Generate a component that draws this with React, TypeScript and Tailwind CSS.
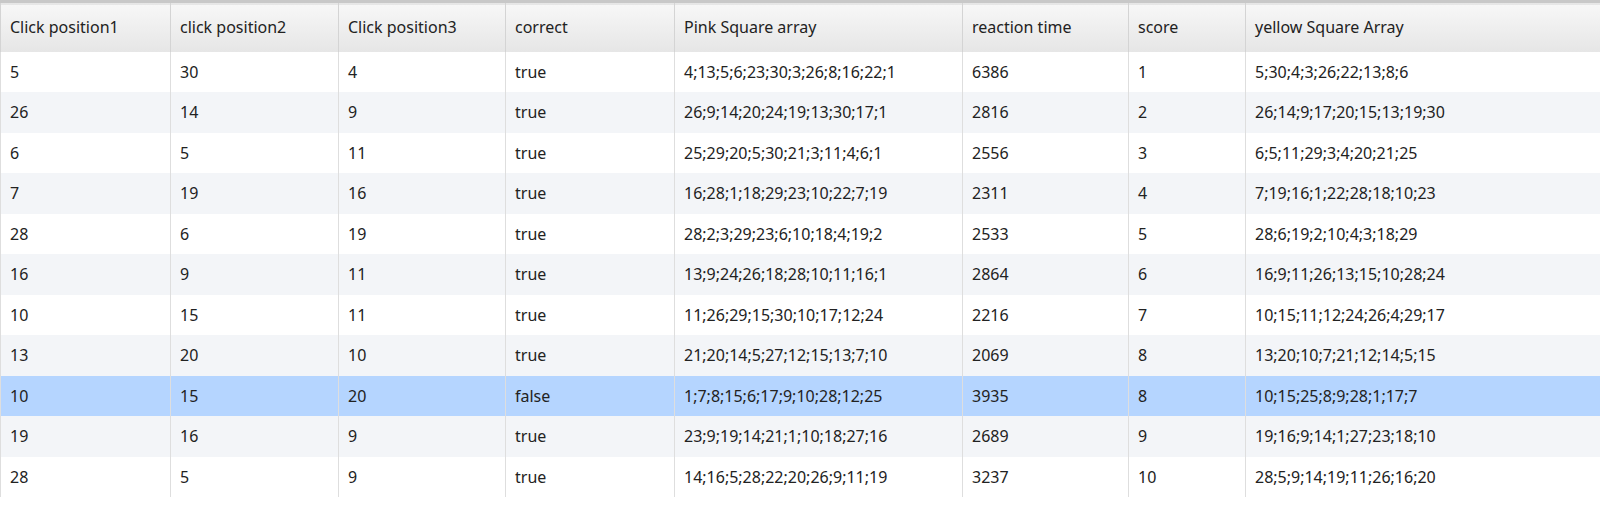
const cols = [
  { name: 'Click position1', w: 'w-[170px]' },
  { name: 'click position2', w: 'w-[168px]' },
  { name: 'Click position3', w: 'w-[167px]' },
  { name: 'correct', w: 'w-[169px]' },
  { name: 'Pink Square array', w: 'w-[288px]' },
  { name: 'reaction time', w: 'w-[166px]' },
  { name: 'score', w: 'w-[117px]' },
  { name: 'yellow Square Array', w: 'w-[355px]' },
];

const rows = [
  ['5', '30', '4', 'true', '4;13;5;6;23;30;3;26;8;16;22;1', '6386', '1', '5;30;4;3;26;22;13;8;6'],
  ['26', '14', '9', 'true', '26;9;14;20;24;19;13;30;17;1', '2816', '2', '26;14;9;17;20;15;13;19;30'],
  ['6', '5', '11', 'true', '25;29;20;5;30;21;3;11;4;6;1', '2556', '3', '6;5;11;29;3;4;20;21;25'],
  ['7', '19', '16', 'true', '16;28;1;18;29;23;10;22;7;19', '2311', '4', '7;19;16;1;22;28;18;10;23'],
  ['28', '6', '19', 'true', '28;2;3;29;23;6;10;18;4;19;2', '2533', '5', '28;6;19;2;10;4;3;18;29'],
  ['16', '9', '11', 'true', '13;9;24;26;18;28;10;11;16;1', '2864', '6', '16;9;11;26;13;15;10;28;24'],
  ['10', '15', '11', 'true', '11;26;29;15;30;10;17;12;24', '2216', '7', '10;15;11;12;24;26;4;29;17'],
  ['13', '20', '10', 'true', '21;20;14;5;27;12;15;13;7;10', '2069', '8', '13;20;10;7;21;12;14;5;15'],
  ['10', '15', '20', 'false', '1;7;8;15;6;17;9;10;28;12;25', '3935', '8', '10;15;25;8;9;28;1;17;7'],
  ['19', '16', '9', 'true', '23;9;19;14;21;1;10;18;27;16', '2689', '9', '19;16;9;14;1;27;23;18;10'],
  ['28', '5', '9', 'true', '14;16;5;28;22;20;26;9;11;19', '3237', '10', '28;5;9;14;19;11;26;16;20'],
];

export default function App() {
  return (
    <div className="w-[1600px] h-[507px] overflow-hidden bg-white text-[16px] text-[#222] font-['DejaVu_Sans']">
      <table className="table-fixed border-collapse w-[1600px] font-['DejaVu_Sans']">
        <colgroup>
          {cols.map((c) => (
            <col key={c.name} className={c.w} />
          ))}
        </colgroup>
        <thead>
          <tr className="h-[50px] bg-gradient-to-b from-[#f7f7f7] to-[#e6e6e6] border-t-[3px] border-[#c8c8c8] shadow-[0_2px_3px_rgba(0,0,0,0.12)]">
            {cols.map((c) => (
              <th key={c.name} className="text-left font-normal pl-[9px] border-x border-[#d4d4d4] whitespace-nowrap overflow-hidden">
                {c.name}
              </th>
            ))}
          </tr>
        </thead>
        <tbody>
          {rows.map((r, i) => (
            <tr
              key={i}
              className={`h-[40.5px] ${i === 8 ? 'bg-[#b5d5ff]' : i % 2 === 1 ? 'bg-[#f3f5f8]' : 'bg-white'}`}
            >
              {r.map((v, j) => (
                <td key={j} className="pl-[9px] pr-[6px] border-x border-[#dedede] whitespace-nowrap overflow-hidden text-ellipsis">
                  {v}
                </td>
              ))}
            </tr>
          ))}
        </tbody>
      </table>
    </div>
  );
}
